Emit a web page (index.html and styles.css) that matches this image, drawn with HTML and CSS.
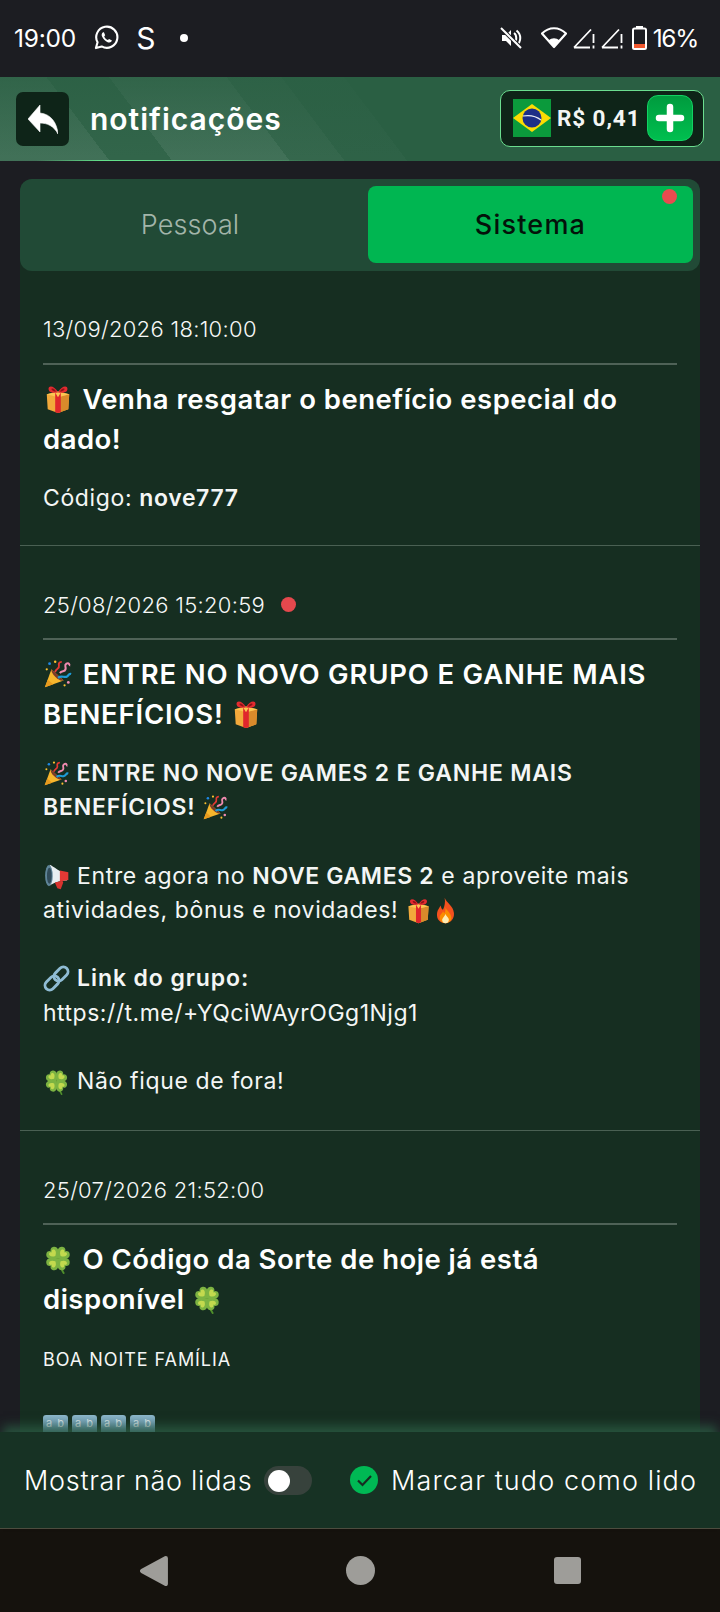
FILE: index.html
```html
<!DOCTYPE html>
<html lang="pt">
<head>
<meta charset="utf-8">
<title>notificações</title>
<link rel="stylesheet" href="styles.css">
</head>
<body>
<svg class="sprite" aria-hidden="true">
  <symbol id="gift" viewBox="0 0 32 32">
    <path d="M4 11l12-3 12 3-1 16-11 4-11-4z" fill="#f2a93b"/>
    <path d="M16 14v17l11-4 1-16z" fill="#d98a2b"/>
    <path d="M4 11l12 3 12-3-12-3z" fill="#fcc652"/>
    <path d="M13 9l3 5v17l-3-1zM19 9l-3 5v17l3-1z" fill="#e0262c"/>
    <path d="M16 9C12 1 5 1 6 6c.5 3 5 4 10 3zM16 9c4-8 11-8 10-3-.5 3-5 4-10 3z" fill="#e32b30"/>
    <path d="M9 5c2-1 4 1 5 3-2 0-5-1-5-3zM23 5c-2-1-4 1-5 3 2 0 5-1 5-3z" fill="#8f1217"/>
  </symbol>
  <symbol id="party" viewBox="0 0 32 32">
    <path d="M2 30l7-19 13 12z" fill="#f6b62d"/>
    <path d="M2 30l3-8 6 5z" fill="#e79a1e"/>
    <path d="M9 11l13 12c-4 2-14-7-13-12z" fill="#7a3b2a"/>
    <path d="M13 14c0-4 5-3 4-7s3-4 3-4" fill="none" stroke="#e53935" stroke-width="2"/>
    <path d="M18 15c2-3 5-1 6-4s-2-4 1-6 3 2 4 2" fill="none" stroke="#f08bb0" stroke-width="2.2"/>
    <path d="M16 20c4-3 6 0 9-1s2-4 5-3" fill="none" stroke="#1e9ad6" stroke-width="2.4"/>
    <circle cx="7" cy="5" r="1.5" fill="#1e88e5"/><circle cx="13" cy="3" r="1.3" fill="#fbc02d"/>
    <circle cx="27" cy="25" r="1.5" fill="#f08bb0"/><circle cx="23" cy="28" r="1.2" fill="#fbc02d"/>
    <circle cx="4" cy="11" r="1.2" fill="#fbc02d"/>
  </symbol>
  <symbol id="mega" viewBox="0 0 32 32">
    <path d="M8 2c3 1 14 10 21 11l-1 8c-5-1-17 3-20 6z" fill="#e8eef1"/>
    <ellipse cx="7" cy="15" rx="4.500" ry="12.500" fill="#5f8599"/>
    <ellipse cx="7.500" cy="15" rx="2.800" ry="9.500" fill="#314b59"/>
    <path d="M20 9l10 2v9l-10 2z" fill="#e53935"/>
    <path d="M14 23l9-2 1 2-3 8-4-1z" fill="#d9342f"/>
  </symbol>
  <symbol id="fire" viewBox="0 0 32 32">
    <path d="M15 1c2 6 10 9 11 18 .6 7-4 12-10 12S5 27 6 19c.5-4 3-6 4-9 1 2 1 4 3 5 2-4 3-9 2-14z" fill="#f4511e"/>
    <path d="M16 12c1 4 7 7 7 13 0 3-3 6-7 6s-7-3-7-6c0-4 3-5 4-8 1 1 1 2 2 2 1-2 1-5 1-7z" fill="#fb8c00"/>
    <path d="M16 20c1 3 4 4 4 7s-2 4-4 4-4-1-4-4c0-2 3-4 4-7z" fill="#ffecb3"/>
  </symbol>
  <symbol id="link" viewBox="0 0 32 32">
    <g transform="rotate(-45 16 16)" fill="none" stroke="#8fbcd4" stroke-width="3.400">
      <rect x="-1" y="10.500" width="19" height="11" rx="5.500"/>
      <rect x="14" y="10.500" width="19" height="11" rx="5.500"/>
    </g>
  </symbol>
  <symbol id="clover" viewBox="0 0 32 32">
    <path d="M16 16c1 6 3 10 6 15" fill="none" stroke="#4f8f2b" stroke-width="2" stroke-linecap="round"/>
    <g transform="translate(16 15.500)">
      <g transform="rotate(-45)"><path d="M0 0C-8-5-9-10-5-12.500-2.500-14 0-12 0-10.500 0-12 2.500-14 5-12.500 9-10 8-5 0 0z" fill="#7cb342"/><path d="M0-4C-4-6-5-9-3-10.500-1.500-11.500 0-10 0-9 0-10 1.500-11.500 3-10.500 5-9 4-6 0-4z" fill="#c3d94e"/></g>
      <g transform="rotate(45)"><path d="M0 0C-8-5-9-10-5-12.500-2.500-14 0-12 0-10.500 0-12 2.500-14 5-12.500 9-10 8-5 0 0z" fill="#7cb342"/><path d="M0-4C-4-6-5-9-3-10.500-1.500-11.500 0-10 0-9 0-10 1.500-11.500 3-10.500 5-9 4-6 0-4z" fill="#c3d94e"/></g>
      <g transform="rotate(135)"><path d="M0 0C-8-5-9-10-5-12.500-2.500-14 0-12 0-10.500 0-12 2.500-14 5-12.500 9-10 8-5 0 0z" fill="#7cb342"/><path d="M0-4C-4-6-5-9-3-10.500-1.500-11.500 0-10 0-9 0-10 1.500-11.500 3-10.500 5-9 4-6 0-4z" fill="#c3d94e"/></g>
      <g transform="rotate(225)"><path d="M0 0C-8-5-9-10-5-12.500-2.500-14 0-12 0-10.500 0-12 2.500-14 5-12.500 9-10 8-5 0 0z" fill="#7cb342"/><path d="M0-4C-4-6-5-9-3-10.500-1.500-11.500 0-10 0-9 0-10 1.500-11.500 3-10.500 5-9 4-6 0-4z" fill="#c3d94e"/></g>
    </g>
  </symbol>
</svg>

<div class="app">
  <div class="statusbar">
    <div class="status-left">
      <span class="clock">19:00</span>
      <svg class="wa" viewBox="0 0 26 26"><path d="M2 24l1.700-6A11 11 0 1 1 8 22.300z" fill="none" stroke="#fff" stroke-width="2.200" stroke-linejoin="round"/><path d="M9.500 7.500c-1.500 1-2 2.700-1 4.800 1.200 2.500 3.300 4.700 5.700 5.600 2.300.8 3.800 0 4.500-1.700l-3-1.700-1.300 1.200c-1.700-.7-3-2-3.800-3.700l1-1.300-1.300-3.200z" fill="#fff"/></svg>
      <span class="s-mark">S</span>
      <span class="dot"></span>
    </div>
    <div class="status-right">
      <svg class="mute" viewBox="0 0 24 24"><path d="M3 9v6h4l5 5V4L7 9z" fill="#fff"/><path d="M15 7c3 2 3 8 0 10M17.500 4.500c5 4 5 11 0 15" fill="none" stroke="#fff" stroke-width="2"/><path d="M2 2l20 20" stroke="#1c1d22" stroke-width="4"/><path d="M2 2l20 20" stroke="#fff" stroke-width="2"/></svg>
      <svg class="wifi" viewBox="0 0 26 22"><path d="M1 6.500C8-.5 18-.5 25 6.500L13 20z" fill="none" stroke="#fff" stroke-width="2.200" stroke-linejoin="round"/><path d="M7.500 13.500c3.500-3 7.500-3 11 0L13 20z" fill="#fff"/></svg>
      <svg class="sig" viewBox="0 0 23 22"><path d="M1 20.500L18 2.500M1 20.500h16" stroke="#fff" stroke-width="1.800" fill="none"/><path d="M20.500 7v9M20.500 18.500v3" stroke="#fff" stroke-width="1.800"/></svg>
      <svg class="sig" viewBox="0 0 23 22"><path d="M1 20.500L18 2.500M1 20.500h16" stroke="#fff" stroke-width="1.800" fill="none"/><path d="M20.500 7v9M20.500 18.500v3" stroke="#fff" stroke-width="1.800"/></svg>
      <svg class="batt" viewBox="0 0 15 24"><rect x="4" y="0" width="7" height="3" fill="#fff"/><rect x="1" y="2.500" width="13" height="20.500" rx="1.500" fill="none" stroke="#fff" stroke-width="2"/><rect x="2" y="18" width="11" height="4" fill="#f0582f"/></svg>
      <span class="pct">16%</span>
    </div>
  </div>

  <header class="topbar">
    <button class="back" type="button" aria-label="voltar">
      <svg viewBox="0 0 30 29"><path d="M12 0L0 14l12 13v-9c7 0 14 3 18 11C29 18 23 9 12 8z" fill="#fff" stroke="#fff" stroke-width=".6" stroke-linejoin="round"/></svg>
    </button>
    <h1 class="page-title">notificações</h1>
    <div class="balance">
      <svg class="flag" viewBox="0 0 38 38"><rect width="38" height="38" fill="#0b9a3c"/><path d="M0 19L19 5l19 14-19 14z" fill="#fbdc03"/><circle cx="19" cy="19" r="9.500" fill="#1c2f87"/><path d="M10 17c6-1 13 0 18 4" stroke="#e8eef5" stroke-width="1.200" fill="none"/></svg>
      <span class="amount">R$ 0,41</span>
      <button class="add" type="button" aria-label="adicionar">
        <svg viewBox="0 0 30 30"><path d="M15 4v22M4 15h22" stroke="#fff" stroke-width="6.500" stroke-linecap="round"/></svg>
      </button>
    </div>
  </header>

  <main class="panel">
    <div class="tabs">
      <button class="tab tab-idle" type="button">Pessoal</button>
      <button class="tab tab-active" type="button">Sistema<span class="tab-dot"></span></button>
    </div>
    <div class="list">
      <article class="note">
        <div class="note-date"><span>13/09/2026 18:10:00</span></div>
        <h2 class="note-title"><svg class="emo-l"><use href="#gift"/></svg> Venha resgatar o benefício especial do dado!</h2>
        <div class="note-body">Código: <b>nove777</b></div>
      </article>
      <article class="note">
        <div class="note-date"><span>25/08/2026 15:20:59</span><i class="unread"></i></div>
        <h2 class="note-title title-caps"><svg class="emo-l"><use href="#party"/></svg> ENTRE NO NOVO GRUPO E GANHE MAIS BENEFÍCIOS! <svg class="emo-l"><use href="#gift"/></svg></h2>
        <div class="note-body">
          <b class="caps"><svg class="emo"><use href="#party"/></svg> ENTRE NO NOVE GAMES 2 E GANHE MAIS<br>BENEFÍCIOS! <svg class="emo"><use href="#party"/></svg></b><br><br>
          <svg class="emo"><use href="#mega"/></svg> Entre agora no <b>NOVE GAMES 2</b> e aproveite mais<br>atividades, bônus e novidades! <svg class="emo"><use href="#gift"/></svg><svg class="emo"><use href="#fire"/></svg><br><br>
          <svg class="emo"><use href="#link"/></svg> <b class="lnk">Link do grupo:</b><br><span class="url">https://t.me/+YQciWAyrOGg1Njg1</span><br><br>
          <svg class="emo"><use href="#clover"/></svg> Não fique de fora!
        </div>
      </article>
      <article class="note">
        <div class="note-date"><span>25/07/2026 21:52:00</span></div>
        <h2 class="note-title"><svg class="emo-l"><use href="#clover"/></svg> O Código da Sorte de hoje já está disponível <svg class="emo-l"><use href="#clover"/></svg></h2>
        <div class="note-body">
          <span class="small">BOA NOITE FAMÍLIA</span>
          <div class="ab-row"><span class="ab">a b</span><span class="ab">a b</span><span class="ab">a b</span><span class="ab">a b</span></div>
        </div>
      </article>
    </div>
  </main>

  <footer class="actions">
    <div class="action">
      <span class="action-label label-show">Mostrar não lidas</span>
      <span class="toggle"><span class="knob"></span></span>
    </div>
    <div class="action">
      <svg class="check" viewBox="0 0 28 28"><circle cx="14" cy="14" r="14" fill="#00b954"/><path d="M8 14.500l4.500 4.500L21 10" fill="none" stroke="#162e21" stroke-width="2.200"/></svg>
      <span class="action-label label-mark">Marcar tudo como lido</span>
    </div>
  </footer>

  <nav class="navbar">
    <svg class="nav-back" viewBox="1 1 26 28"><path d="M25 3L3 15l22 12z" fill="#9e9d99" stroke="#9e9d99" stroke-width="4" stroke-linejoin="round"/></svg>
    <span class="nav-home"></span>
    <span class="nav-recent"></span>
  </nav>
</div>
</body>
</html>
```

FILE: styles.css
```css
* { box-sizing: border-box; }
html, body { margin: 0; padding: 0; height: 100%; }
body { background: #1c1d22; font-family: "Inter", "Noto Sans", sans-serif; color: #fff; }
.sprite { display: none; }
.app { width: 720px; height: 1612px; display: flex; flex-direction: column; overflow: hidden; }

/* status bar */
.statusbar { flex: 0 0 77px; display: flex; justify-content: space-between; align-items: center; padding: 0 22px 2px 14px; background: #1c1d22; }
.status-left, .status-right { display: flex; align-items: center; }
.clock { font-size: 24.500px; letter-spacing: -.2px; }
.wa { width: 25px; height: 25px; margin-left: 18px; }
.s-mark { font-size: 30px; margin-left: 17px; width: 20px; }
.dot { width: 8px; height: 8px; border-radius: 50%; background: #fff; margin-left: 24px; }
.mute { width: 24px; height: 24px; margin-right: 18px; }
.wifi { width: 26px; height: 22px; margin-right: 6px; }
.sig { width: 23px; height: 22px; margin-right: 5px; }
.sig + .batt { margin-left: 3px; }
.batt { width: 15px; height: 24px; margin-right: 6px; }
.pct { font-size: 24.500px; letter-spacing: -1.300px; }

/* header */
.topbar { flex: 0 0 84px; display: flex; align-items: center; padding: 0 16px 0 16px;
  background:
    linear-gradient(90deg, transparent 5%, #63e08a 14%, #63e08a 20%, transparent 45%) bottom / 100% 1px no-repeat,
    linear-gradient(180deg, rgba(42,95,67,.7), rgba(42,95,67,0) 95%),
    linear-gradient(53deg, rgba(255,255,255,.11) 0 14%, rgba(255,255,255,.04) 14% 22%, rgba(255,255,255,.11) 22% 37%, rgba(255,255,255,.05) 37% 44%, rgba(255,255,255,.02) 44% 52%, transparent 52%),
    #2a5f43; }
.back { width: 53px; height: 54px; padding: 0; border: 0; border-radius: 7px; background: #0e2418; display: flex; align-items: center; justify-content: center; }
.back svg { width: 30px; height: 29px; }
.page-title { margin: 0 0 0 21px; flex: 1; font-size: 30px; font-weight: 600; letter-spacing: 1px; line-height: 1; }
.balance { width: 204px; height: 57px; margin-bottom: 2px; display: flex; align-items: center; padding: 0 10px 0 12px; border: 1px solid #6bdd8f; border-radius: 10px; background: #0e2418; }
.flag { width: 38px; height: 38px; flex: none; }
.amount { font-family: "Roboto", sans-serif; font-size: 22.500px; font-weight: 700; letter-spacing: .9px; margin-left: 6px; flex: 1; white-space: nowrap; color: #f4f6f4; }
.add { width: 46px; height: 46px; padding: 0; border: 1px solid #12d263; border-radius: 11px; background: linear-gradient(#009b3e, #00bf4f); display: flex; align-items: center; justify-content: center; }
.add svg { width: 30px; height: 30px; }

/* panel */
.panel { flex: 1; min-height: 0; margin: 18px 20px 0; display: flex; flex-direction: column; background: #162e21; border-radius: 12px 12px 0 0; }
.tabs { flex: none; height: 92px; display: grid; grid-template-columns: 1fr 325px; padding: 7px 7px 8px 0; background: #214a36; border-radius: 12px; }
.tab { position: relative; border: 0; border-radius: 8px; background: transparent; font-family: inherit; font-size: 27px; color: #a3b5aa; }
.tab-idle { padding: 0 8px 0 0; font-weight: 300; letter-spacing: .1px; }
.tab-active { padding: 0; background: #00b651; color: #04120a; font-weight: 500; letter-spacing: 1.200px; }
.tab-dot { position: absolute; top: 3px; right: 16px; width: 15px; height: 15px; border-radius: 50%; background: #e84b4f; }
.list { flex: 1; min-height: 0; overflow: hidden; }

/* notifications */
.note { padding: 40px 23px 30px 23px; border-bottom: 1px solid #4a6053; }
.note + .note { padding-top: 41px; padding-bottom: 32px; }
.note-date { height: 53px; padding-bottom: 16px; display: flex; align-items: center; border-bottom: 2px solid #4f6257; font-size: 22px; font-weight: 300; letter-spacing: .3px; color: #f6f8f7; }
.note:first-child .note-date { height: 54px; }
.unread { width: 15px; height: 15px; margin-left: 16px; border-radius: 50%; background: #e5484d; }
.note-title { margin: 14px 0 0; font-size: 27.500px; line-height: 40px; font-weight: 600; letter-spacing: .5px; }
.title-caps { letter-spacing: .8px; }
.emo-l { width: 30px; height: 30px; vertical-align: -5px; margin-right: 2px; }
.note-body { margin-top: 22px; font-size: 23px; line-height: 34.200px; font-weight: 400; letter-spacing: .63px; color: #f4f6f5; }
.note-body b { font-weight: 600; }
.note-body .caps { letter-spacing: .8px; }
.note-body .lnk { letter-spacing: .9px; }
.url { letter-spacing: .5px; }
.small { font-size: 18px; letter-spacing: .95px; }
.emo { width: 27px; height: 27px; vertical-align: -6px; }
.ab-row { display: flex; gap: 4px; margin-top: 38px; }
.ab { width: 25px; height: 25px; border-radius: 3px; background: linear-gradient(#8db7cc, #4a7a94); color: #dfe9ee; font-size: 11px; line-height: 14px; padding-top: 1px; letter-spacing: 1px; text-align: center; overflow: hidden; white-space: nowrap; }

/* footer */
.actions { position: relative; flex: 0 0 97px; display: flex; justify-content: space-between; align-items: center; padding: 0 23px 0 24px; background: #173224; border-bottom: 1px solid #4d4c3f; box-shadow: 0 -9px 10px -3px rgba(42,90,66,.85); }
.action { display: flex; align-items: center; }
.action-label { font-size: 27px; font-weight: 300; white-space: nowrap; }
.label-show { letter-spacing: .72px; }
.label-mark { letter-spacing: 1.100px; }
.toggle { width: 48px; height: 29px; margin-left: 12px; padding: 4px; border-radius: 15px; background: #37423c; }
.knob { display: block; width: 22px; height: 22px; border-radius: 50%; background: #fff; }
.check { width: 28px; height: 28px; margin-right: 13px; }

/* nav bar */
.navbar { flex: 0 0 83px; display: grid; grid-template-columns: repeat(3, 207px); align-items: center; justify-items: center; padding: 0 49px 0 50px; background: #15120d; }
.nav-back { width: 28px; height: 30px; }
.nav-home { width: 29px; height: 29px; border-radius: 50%; background: #9e9d99; }
.nav-recent { width: 27px; height: 27px; border-radius: 3px; background: #9e9d99; }
```
